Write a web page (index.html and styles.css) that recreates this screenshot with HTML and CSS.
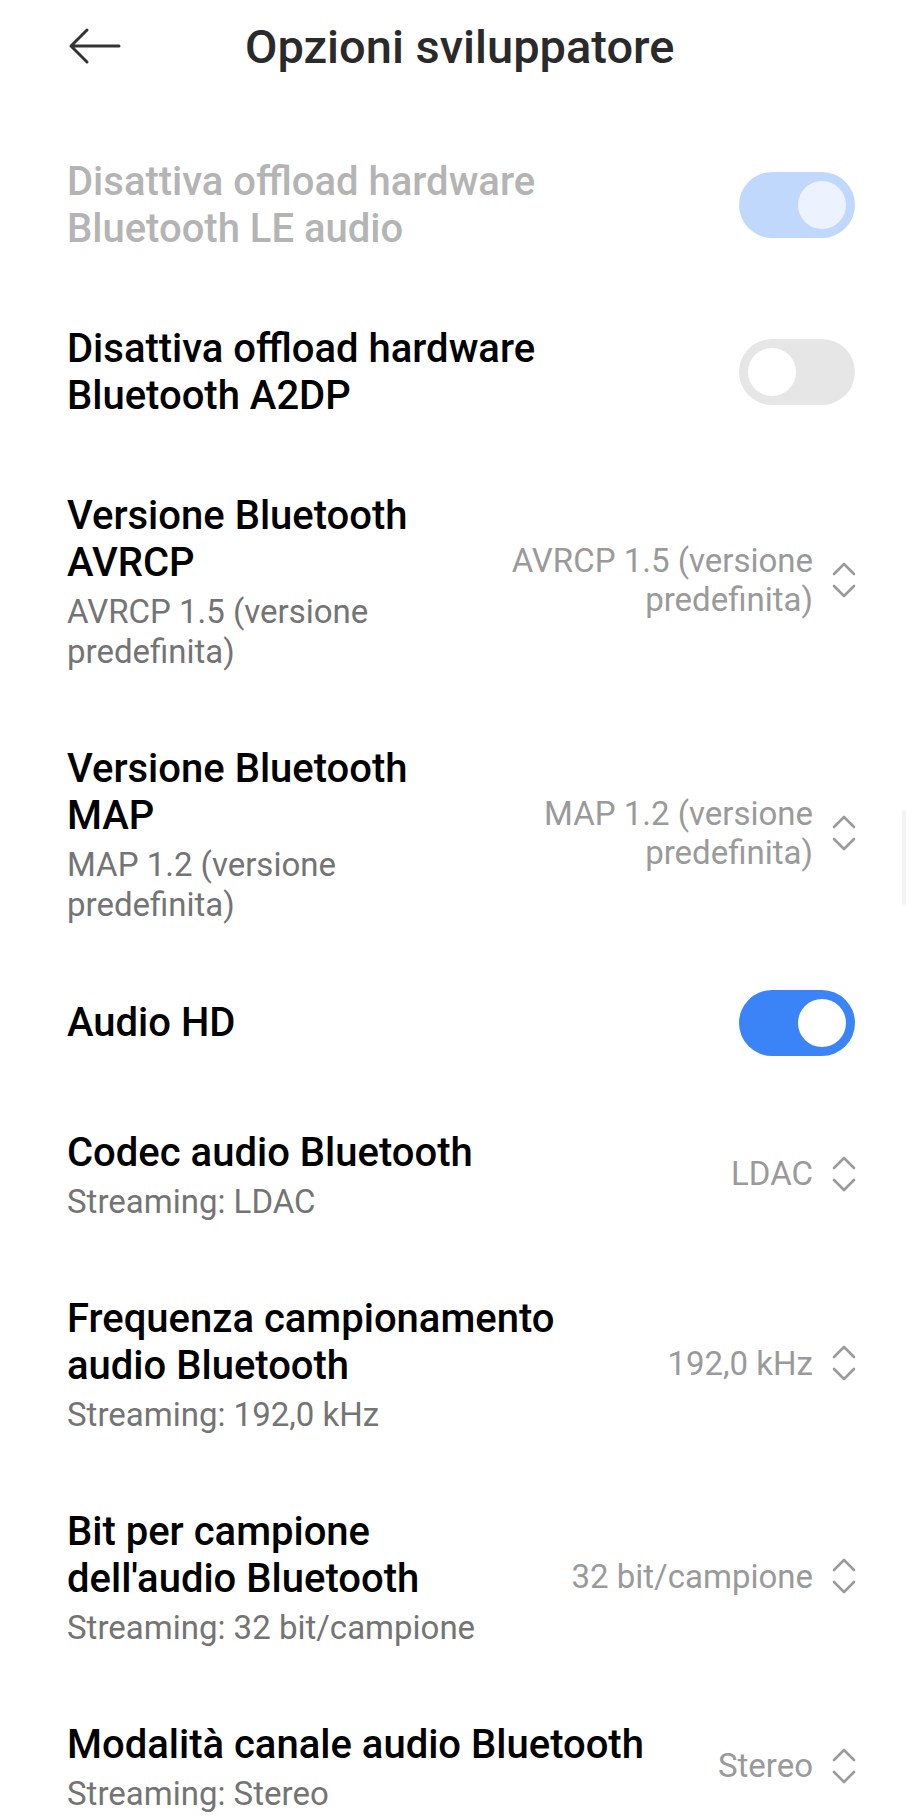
FILE: index.html
```html
<!DOCTYPE html>
<html lang="it">
<head>
    <meta charset="UTF-8">
    <meta name="viewport" content="width=device-width, initial-scale=1.0">
    <title>Opzioni sviluppatore</title>
    <link rel="stylesheet" href="styles.css">
</head>
<body>

    <header class="topbar">
        <svg class="back" width="54" height="38" viewBox="0 0 54 38">
            <path d="M52 19 H4 M20 3 L4 19 L20 35" fill="none" stroke="#333" stroke-width="3" stroke-linecap="round" stroke-linejoin="round"/>
        </svg>
        <h1 class="page-title">Opzioni sviluppatore</h1>
    </header>

    <main class="list">

        <div class="item disabled">
            <div class="text">
                <div class="title">Disattiva offload hardware Bluetooth LE audio</div>
            </div>
            <div class="toggle on dim"><span class="knob"></span></div>
        </div>

        <div class="item">
            <div class="text">
                <div class="title">Disattiva offload hardware Bluetooth A2DP</div>
            </div>
            <div class="toggle"><span class="knob"></span></div>
        </div>

        <div class="item">
            <div class="text">
                <div class="title">Versione Bluetooth AVRCP</div>
                <div class="summary">AVRCP 1.5 (versione predefinita)</div>
            </div>
            <div class="value">AVRCP 1.5 (versione predefinita)</div>
            <svg class="updown" width="24" height="36" viewBox="0 0 24 36">
                <path d="M2 12 L12 2 L22 12 M2 24 L12 34 L22 24" fill="none" stroke="#9a9a9a" stroke-width="2.6" stroke-linecap="round" stroke-linejoin="round"/>
            </svg>
        </div>

        <div class="item">
            <div class="text">
                <div class="title">Versione Bluetooth MAP</div>
                <div class="summary">MAP 1.2 (versione predefinita)</div>
            </div>
            <div class="value">MAP 1.2 (versione predefinita)</div>
            <svg class="updown" width="24" height="36" viewBox="0 0 24 36">
                <path d="M2 12 L12 2 L22 12 M2 24 L12 34 L22 24" fill="none" stroke="#9a9a9a" stroke-width="2.6" stroke-linecap="round" stroke-linejoin="round"/>
            </svg>
        </div>

        <div class="item switch-row">
            <div class="text">
                <div class="title">Audio HD</div>
            </div>
            <div class="toggle on"><span class="knob"></span></div>
        </div>

        <div class="item">
            <div class="text">
                <div class="title">Codec audio Bluetooth</div>
                <div class="summary">Streaming: LDAC</div>
            </div>
            <div class="value">LDAC</div>
            <svg class="updown" width="24" height="36" viewBox="0 0 24 36">
                <path d="M2 12 L12 2 L22 12 M2 24 L12 34 L22 24" fill="none" stroke="#9a9a9a" stroke-width="2.6" stroke-linecap="round" stroke-linejoin="round"/>
            </svg>
        </div>

        <div class="item">
            <div class="text">
                <div class="title">Frequenza campionamento audio Bluetooth</div>
                <div class="summary">Streaming: 192,0 kHz</div>
            </div>
            <div class="value">192,0 kHz</div>
            <svg class="updown" width="24" height="36" viewBox="0 0 24 36">
                <path d="M2 12 L12 2 L22 12 M2 24 L12 34 L22 24" fill="none" stroke="#9a9a9a" stroke-width="2.6" stroke-linecap="round" stroke-linejoin="round"/>
            </svg>
        </div>

        <div class="item">
            <div class="text">
                <div class="title">Bit per campione dell'audio Bluetooth</div>
                <div class="summary">Streaming: 32 bit/campione</div>
            </div>
            <div class="value">32 bit/campione</div>
            <svg class="updown" width="24" height="36" viewBox="0 0 24 36">
                <path d="M2 12 L12 2 L22 12 M2 24 L12 34 L22 24" fill="none" stroke="#9a9a9a" stroke-width="2.6" stroke-linecap="round" stroke-linejoin="round"/>
            </svg>
        </div>

        <div class="item">
            <div class="text">
                <div class="title">Modalità canale audio Bluetooth</div>
                <div class="summary">Streaming: Stereo</div>
            </div>
            <div class="value">Stereo</div>
            <svg class="updown" width="24" height="36" viewBox="0 0 24 36">
                <path d="M2 12 L12 2 L22 12 M2 24 L12 34 L22 24" fill="none" stroke="#9a9a9a" stroke-width="2.6" stroke-linecap="round" stroke-linejoin="round"/>
            </svg>
        </div>

    </main>

    <div class="scrollbar"></div>

</body>
</html>
```

FILE: styles.css
```css
body {
    font-family: 'Roboto', 'Noto Sans', sans-serif;
    margin: 0;
    padding: 0;
    background-color: #fff;
    color: #000;
    overflow: hidden;
}

.topbar {
    display: flex;
    align-items: center;
    height: 92px;
    padding-left: 67px;
}

.back {
    display: block;
    flex: none;
}

.page-title {
    margin: 0 0 0 124px;
    font-size: 47px;
    font-weight: 500;
    color: #2a2a2a;
}

.list {
    padding-top: 29px;
}

.item {
    display: flex;
    align-items: center;
    padding: 36.5px 66px 36.5px 67px;
}

.switch-row {
    padding-top: 28.5px;
}

.text {
    flex: 1 1 auto;
    min-width: 0;
}

.title {
    font-size: 40px;
    line-height: 47px;
    font-weight: 500;
    color: #000;
}

.disabled .title {
    color: #b4b4b4;
}

.summary {
    margin-top: 6px;
    font-size: 33px;
    line-height: 40px;
    color: #747474;
}

.value {
    flex: none;
    max-width: 320px;
    margin-left: 40px;
    margin-top: -3px;
    font-size: 33px;
    line-height: 39px;
    color: #9a9a9a;
    text-align: right;
}

.updown {
    display: block;
    flex: none;
    margin-left: 19px;
    margin-right: -1px;
    margin-top: -3px;
}

/* switches */
.toggle {
    position: relative;
    flex: none;
    width: 116px;
    height: 66px;
    margin-left: 40px;
    border-radius: 33px;
    background-color: #e6e6e6;
}

.toggle .knob {
    position: absolute;
    top: 9px;
    left: 9px;
    width: 48px;
    height: 48px;
    border-radius: 50%;
    background-color: #fff;
}

.toggle.on {
    background-color: #3b84f7;
}

.toggle.on .knob {
    left: auto;
    right: 9px;
}

.toggle.dim {
    background-color: #c0d8fb;
}

.toggle.dim .knob {
    background-color: #edf3fe;
}

.scrollbar {
    position: absolute;
    top: 810px;
    right: 15px;
    width: 4px;
    height: 95px;
    border-radius: 2px;
    background-color: #f3f3f3;
}
```
